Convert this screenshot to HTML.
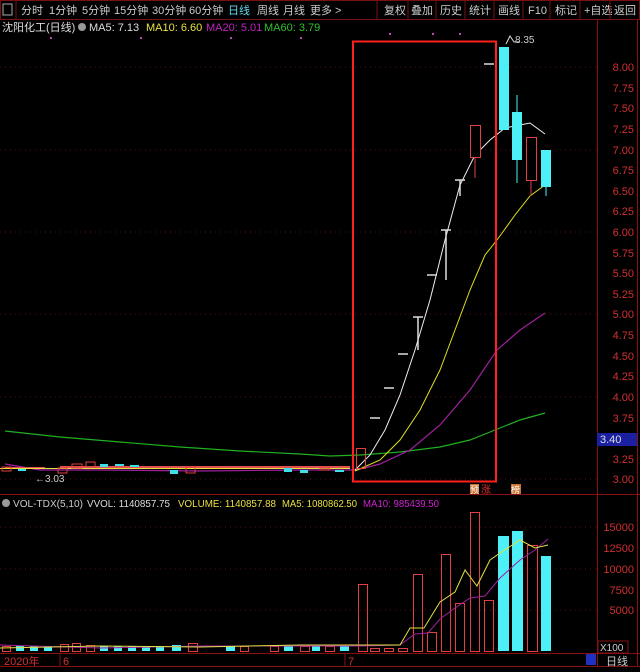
<!DOCTYPE html>
<html><head><meta charset="utf-8"><style>
body{margin:0;background:#000;width:640px;height:672px;overflow:hidden;font-family:"Liberation Sans","Noto Sans CJK SC",sans-serif}
svg{display:block}
text{font-family:"Liberation Sans","Noto Sans CJK SC",sans-serif}
</style></head><body>
<svg width="640" height="672" viewBox="0 0 640 672" xmlns="http://www.w3.org/2000/svg">
<rect width="640" height="672" fill="#000"/>
<rect x="0.5" y="0.5" width="639" height="19" fill="#000" stroke="#7a1010"/>
<rect x="3" y="4" width="9" height="11" fill="none" stroke="#aaa"/>
<line x1="16" y1="1" x2="16" y2="19" stroke="#7a1010"/>
<g fill="#ccc" font-size="11">
<text x="21" y="14">分时</text><text x="49" y="14">1分钟</text><text x="82" y="14">5分钟</text><text x="114" y="14">15分钟</text><text x="152" y="14">30分钟</text><text x="189" y="14">60分钟</text>
<text x="228" y="14" fill="#5fd8e8">日线</text><text x="257" y="14">周线</text><text x="283" y="14">月线</text><text x="310" y="14">更多 &gt;</text>
<text x="384" y="14">复权</text><text x="411" y="14">叠加</text><text x="440" y="14">历史</text><text x="469" y="14">统计</text><text x="498" y="14">画线</text><text x="528" y="14">F10</text><text x="555" y="14">标记</text><text x="584" y="14">+自选</text><text x="614" y="14">返回</text>
</g>
<g stroke="#7a1010">
<line x1="377" y1="1" x2="377" y2="19"/><line x1="408" y1="1" x2="408" y2="19"/><line x1="436" y1="1" x2="436" y2="19"/><line x1="465" y1="1" x2="465" y2="19"/><line x1="494" y1="1" x2="494" y2="19"/><line x1="523" y1="1" x2="523" y2="19"/><line x1="550" y1="1" x2="550" y2="19"/><line x1="580" y1="1" x2="580" y2="19"/><line x1="610" y1="1" x2="610" y2="19"/>
</g>
<g font-size="11">
<text x="2" y="31" fill="#ddd">沈阳化工(日线)</text>
<circle cx="82" cy="27" r="4" fill="#999"/>
<text x="89" y="31" fill="#ddd">MA5: 7.13</text>
<text x="146" y="31" fill="#e8e040">MA10: 6.60</text>
<text x="206" y="31" fill="#c020c0">MA20: 5.01</text>
<text x="264" y="31" fill="#30c030">MA60: 3.79</text>
</g>
<line x1="597.5" y1="20" x2="597.5" y2="666" stroke="#8a1010"/>
<line x1="0" y1="494.5" x2="640" y2="494.5" stroke="#8a1010"/>
<line x1="0" y1="653.5" x2="640" y2="653.5" stroke="#8a1010"/>
<line x1="0" y1="666.5" x2="640" y2="666.5" stroke="#8a1010"/>
<line x1="637.5" y1="20" x2="637.5" y2="666" stroke="#8a1010"/>
<g stroke="#5a1010" stroke-dasharray="1,4">
<line x1="0" y1="67" x2="597" y2="67"/><line x1="0" y1="150" x2="597" y2="150"/><line x1="0" y1="232" x2="597" y2="232"/><line x1="0" y1="314" x2="597" y2="314"/><line x1="0" y1="397" x2="597" y2="397"/><line x1="0" y1="479" x2="597" y2="479"/>
<line x1="0" y1="527" x2="597" y2="527"/><line x1="0" y1="569" x2="597" y2="569"/><line x1="0" y1="610" x2="597" y2="610"/>
</g>
<g fill="#c040c0"><rect x="50" y="37" width="2" height="2"/><rect x="140" y="37" width="2" height="2"/><rect x="230" y="37" width="2" height="2"/><rect x="300" y="37" width="2" height="2"/><rect x="389" y="33" width="2" height="2"/><rect x="432" y="33" width="2" height="2"/><rect x="459" y="33" width="2" height="2"/></g>
<g fill="#d03030" font-size="11" text-anchor="end">
<text x="634" y="71">8.00</text><text x="634" y="92">7.75</text><text x="634" y="112">7.50</text><text x="634" y="133">7.25</text><text x="634" y="154">7.00</text><text x="634" y="174">6.75</text><text x="634" y="195">6.50</text><text x="634" y="215">6.25</text><text x="634" y="236">6.00</text><text x="634" y="257">5.75</text><text x="634" y="277">5.50</text><text x="634" y="298">5.25</text><text x="634" y="318">5.00</text><text x="634" y="339">4.75</text><text x="634" y="360">4.50</text><text x="634" y="380">4.25</text><text x="634" y="401">4.00</text><text x="634" y="422">3.75</text><text x="634" y="463">3.25</text><text x="634" y="483">3.00</text>
<text x="634" y="531">15000</text><text x="634" y="552">12500</text><text x="634" y="573">10000</text><text x="634" y="594">7500</text><text x="634" y="614">5000</text>
</g>
<rect x="597" y="433" width="40" height="13" fill="#1a20a0"/>
<text x="600" y="443" fill="#ddd" font-size="11">3.40</text>
<rect x="598" y="641" width="30" height="12" fill="none" stroke="#8a1010"/>
<text x="600" y="651" fill="#ccc" font-size="10">X100</text>
<polyline fill="none" stroke="#20b020" stroke-width="1.2" points="5,431 60,437 120,442 180,447 240,451 300,454 330,456 360,455 400,452 440,447 470,440 500,428 520,420 545,413"/>
<polyline fill="none" stroke="#a020a0" stroke-width="1.2" points="5,464 40,470 100,470 200,471 300,470 356,470 380,464 410,450 440,425 470,390 497,350 520,330 545,313"/>
<polyline fill="none" stroke="#e0e020" stroke-width="1" points="355,471 380,460 400,440 420,410 440,370 455,330 470,290 485,255 497,240 515,215 530,196 545,185"/>
<polyline fill="none" stroke="#eee" stroke-width="1" points="355,470 370,455 385,430 400,395 415,350 430,300 445,240 460,185 475,155 490,140 505,128 520,125 530,123 545,134"/>
<polyline fill="none" stroke="#ddd" points="506,44 510,36 514,42 520,42"/>
<text x="515" y="43" fill="#ccc" font-size="10">8.35</text>
<g fill="#e05050"><rect x="5" y="467" width="40" height="2"/><rect x="60" y="466" width="290" height="2"/></g>
<g fill="#e8e040"><rect x="0" y="468" width="350" height="1"/></g>
<g stroke="#e04040" fill="none">
<rect x="2" y="467" width="9" height="4"/><rect x="58" y="468" width="9" height="5"/><rect x="72" y="464" width="10" height="4"/><rect x="86" y="462" width="9" height="5"/><rect x="186" y="467" width="9" height="6"/><rect x="320" y="468" width="9" height="2"/>
</g>
<g fill="#40e0e8">
<rect x="18" y="469" width="8" height="2"/><rect x="100" y="464" width="8" height="3"/><rect x="115" y="464" width="9" height="2"/><rect x="130" y="465" width="9" height="2"/><rect x="170" y="470" width="8" height="4"/><rect x="284" y="468" width="8" height="4"/><rect x="300" y="470" width="8" height="3"/><rect x="335" y="470" width="9" height="2"/>
</g>
<text x="35" y="482" fill="#ccc" font-size="10">←3.03</text>
<rect x="353" y="41.5" width="143" height="440" fill="none" stroke="#ff2020" stroke-width="2"/>
<rect x="356.5" y="448.5" width="9" height="20" fill="none" stroke="#e04040"/>
<g stroke="#ddd" stroke-width="1.5">
<line x1="370" y1="418" x2="380" y2="418"/><line x1="384" y1="388" x2="394" y2="388"/><line x1="398" y1="354" x2="408" y2="354"/>
<line x1="413" y1="317" x2="423" y2="317"/><line x1="418" y1="317" x2="418" y2="350"/>
<line x1="427" y1="275" x2="437" y2="275"/>
<line x1="441" y1="230" x2="451" y2="230"/><line x1="446" y1="230" x2="446" y2="280"/>
<line x1="455" y1="180" x2="465" y2="180"/><line x1="460" y1="180" x2="460" y2="196"/>
<line x1="484" y1="64" x2="494" y2="64"/>
</g>
<line x1="475" y1="157" x2="475" y2="178" stroke="#e04040"/>
<rect x="470.5" y="125.5" width="10" height="32" fill="#000" stroke="#e04040"/>
<rect x="499" y="47" width="10" height="83" fill="#4ef0f8"/>
<line x1="517" y1="95" x2="517" y2="183" stroke="#4ef0f8"/>
<rect x="512" y="112" width="10" height="48" fill="#4ef0f8"/>
<line x1="531" y1="181" x2="531" y2="196" stroke="#e04040"/>
<rect x="526.5" y="137.5" width="10" height="43" fill="#000" stroke="#e04040"/>
<line x1="546" y1="186" x2="546" y2="196" stroke="#4ef0f8"/>
<rect x="541" y="150" width="10" height="37" fill="#4ef0f8"/>
<rect x="470" y="484" width="9" height="10" fill="#c87030"/><text x="470" y="493" fill="#fff" font-size="9">预</text>
<text x="481" y="493" fill="#e03030" font-size="10">涨</text>
<rect x="511" y="484" width="10" height="10" fill="#c87030"/><text x="511" y="493" fill="#fff" font-size="9">榜</text>
<g font-size="10">
<circle cx="6" cy="503" r="4" fill="#999"/>
<text x="13" y="507" fill="#ccc" textLength="70" lengthAdjust="spacingAndGlyphs">VOL-TDX(5,10)</text>
<text x="87" y="507" fill="#ddd" textLength="83" lengthAdjust="spacingAndGlyphs">VVOL: 1140857.75</text>
<text x="178" y="507" fill="#e8e040" textLength="98" lengthAdjust="spacingAndGlyphs">VOLUME: 1140857.88</text>
<text x="282" y="507" fill="#e8e040" textLength="75" lengthAdjust="spacingAndGlyphs">MA5: 1080862.50</text>
<text x="363" y="507" fill="#d020d0" textLength="76" lengthAdjust="spacingAndGlyphs">MA10: 985439.50</text>
</g>
<g fill="none" stroke="#e04040">
<rect x="2.5" y="646.5" width="8" height="5"/><rect x="60.5" y="644.5" width="8" height="7"/><rect x="72.5" y="643.5" width="8" height="8"/><rect x="86.5" y="645.5" width="8" height="6"/><rect x="188.5" y="643.5" width="9" height="8"/><rect x="240.5" y="646.5" width="8" height="5"/><rect x="270.5" y="646.5" width="8" height="5"/><rect x="300.5" y="646.5" width="9" height="5"/><rect x="325.5" y="646.5" width="9" height="5"/>
<rect x="358.5" y="584.5" width="9" height="67"/><rect x="370.5" y="648.5" width="9" height="3"/><rect x="384.5" y="648.5" width="9" height="3"/><rect x="398.5" y="648.5" width="9" height="3"/>
<rect x="413.5" y="574.5" width="9" height="77"/><rect x="427.5" y="632.5" width="9" height="19"/><rect x="441.5" y="554.5" width="9" height="97"/><rect x="455.5" y="603.5" width="9" height="48"/><rect x="470.5" y="512.5" width="9" height="139"/><rect x="484.5" y="600.5" width="9" height="51"/>
<rect x="527.5" y="545.5" width="10" height="106"/>
</g>
<g fill="#4ef0f8">
<rect x="16" y="646" width="8" height="5"/><rect x="30" y="646" width="8" height="5"/><rect x="44" y="646" width="8" height="5"/><rect x="100" y="646" width="8" height="5"/><rect x="114" y="646" width="8" height="5"/><rect x="128" y="646" width="8" height="5"/><rect x="142" y="646" width="8" height="5"/><rect x="156" y="646" width="8" height="5"/><rect x="172" y="645" width="9" height="6"/><rect x="226" y="646" width="9" height="5"/><rect x="284" y="646" width="9" height="5"/><rect x="312" y="646" width="8" height="5"/><rect x="340" y="646" width="9" height="5"/>
<rect x="498" y="536" width="11" height="115"/><rect x="512" y="531" width="11" height="120"/><rect x="541" y="556" width="10" height="95"/>
</g>
<polyline fill="none" stroke="#a020a0" points="0,645 100,648 200,646 300,646 360,646 400,645 415,634 428,633 440,619 455,608 470,598 485,596 500,578 520,560 535,550 548,539"/>
<polyline fill="none" stroke="#e0e040" points="0,648 100,646 200,647 300,645 360,645 400,645 410,628 424,628 440,602 455,592 465,570 477,586 490,560 500,553 520,540 535,548 548,545"/>
<g font-size="11" fill="#d03030">
<text x="4" y="665">2020年</text><line x1="60" y1="654" x2="60" y2="666" stroke="#8a1010"/><text x="63" y="665">6</text>
<line x1="345" y1="654" x2="345" y2="666" stroke="#8a1010"/><text x="348" y="665">7</text>
</g>
<rect x="586" y="654" width="10" height="11" fill="#2030c0"/>
<text x="606" y="665" fill="#ccc" font-size="11">日线</text>
</svg>
</body></html>
